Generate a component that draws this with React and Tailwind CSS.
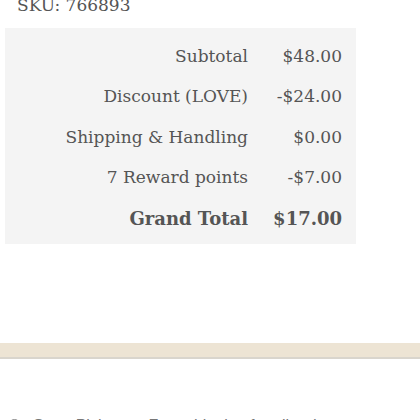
const rows = [
    { label: 'Subtotal', value: '$48.00' },
    { label: 'Discount (LOVE)', value: '-$24.00' },
    { label: 'Shipping & Handling', value: '$0.00' },
    { label: '7 Reward points', value: '-$7.00' },
    { label: 'Grand Total', value: '$17.00', bold: true },
];

export default function App() {
    return (
        <div className="h-[420px] w-[420px] overflow-hidden bg-white font-['DejaVu_Serif',serif] text-[#555]">
            <p className="-mt-[6px] pl-[17px] text-[17px] leading-[22px]">SKU: 766893</p>

            <div className="ml-[5px] mt-[12px] w-[351px] bg-[#f4f4f4] pb-[5px] pr-[14px] pt-[8px]">
                {rows.map((row) => (
                    <div
                        key={row.label}
                        className={`grid h-[40.6px] grid-cols-[1fr_94px] items-center ${
                            row.bold ? 'text-[18px] font-bold' : 'text-[17px]'
                        }`}
                    >
                        <span className="text-right">{row.label}</span>
                        <span className="text-right">{row.value}</span>
                    </div>
                ))}
            </div>

            <div className="mt-[99px] h-[16px] border-b-2 border-[#d9d5cd] bg-[#ede4d4]" />

            <div className="mt-[55px] flex items-center gap-3 pl-[8px] font-['Liberation_Sans',sans-serif] text-[16px] text-[#777]">
                <span className="size-[13px] rounded-full border border-[#888]" />
                <span>Store Pickup — Free shipping for all orders</span>
            </div>
        </div>
    );
}
